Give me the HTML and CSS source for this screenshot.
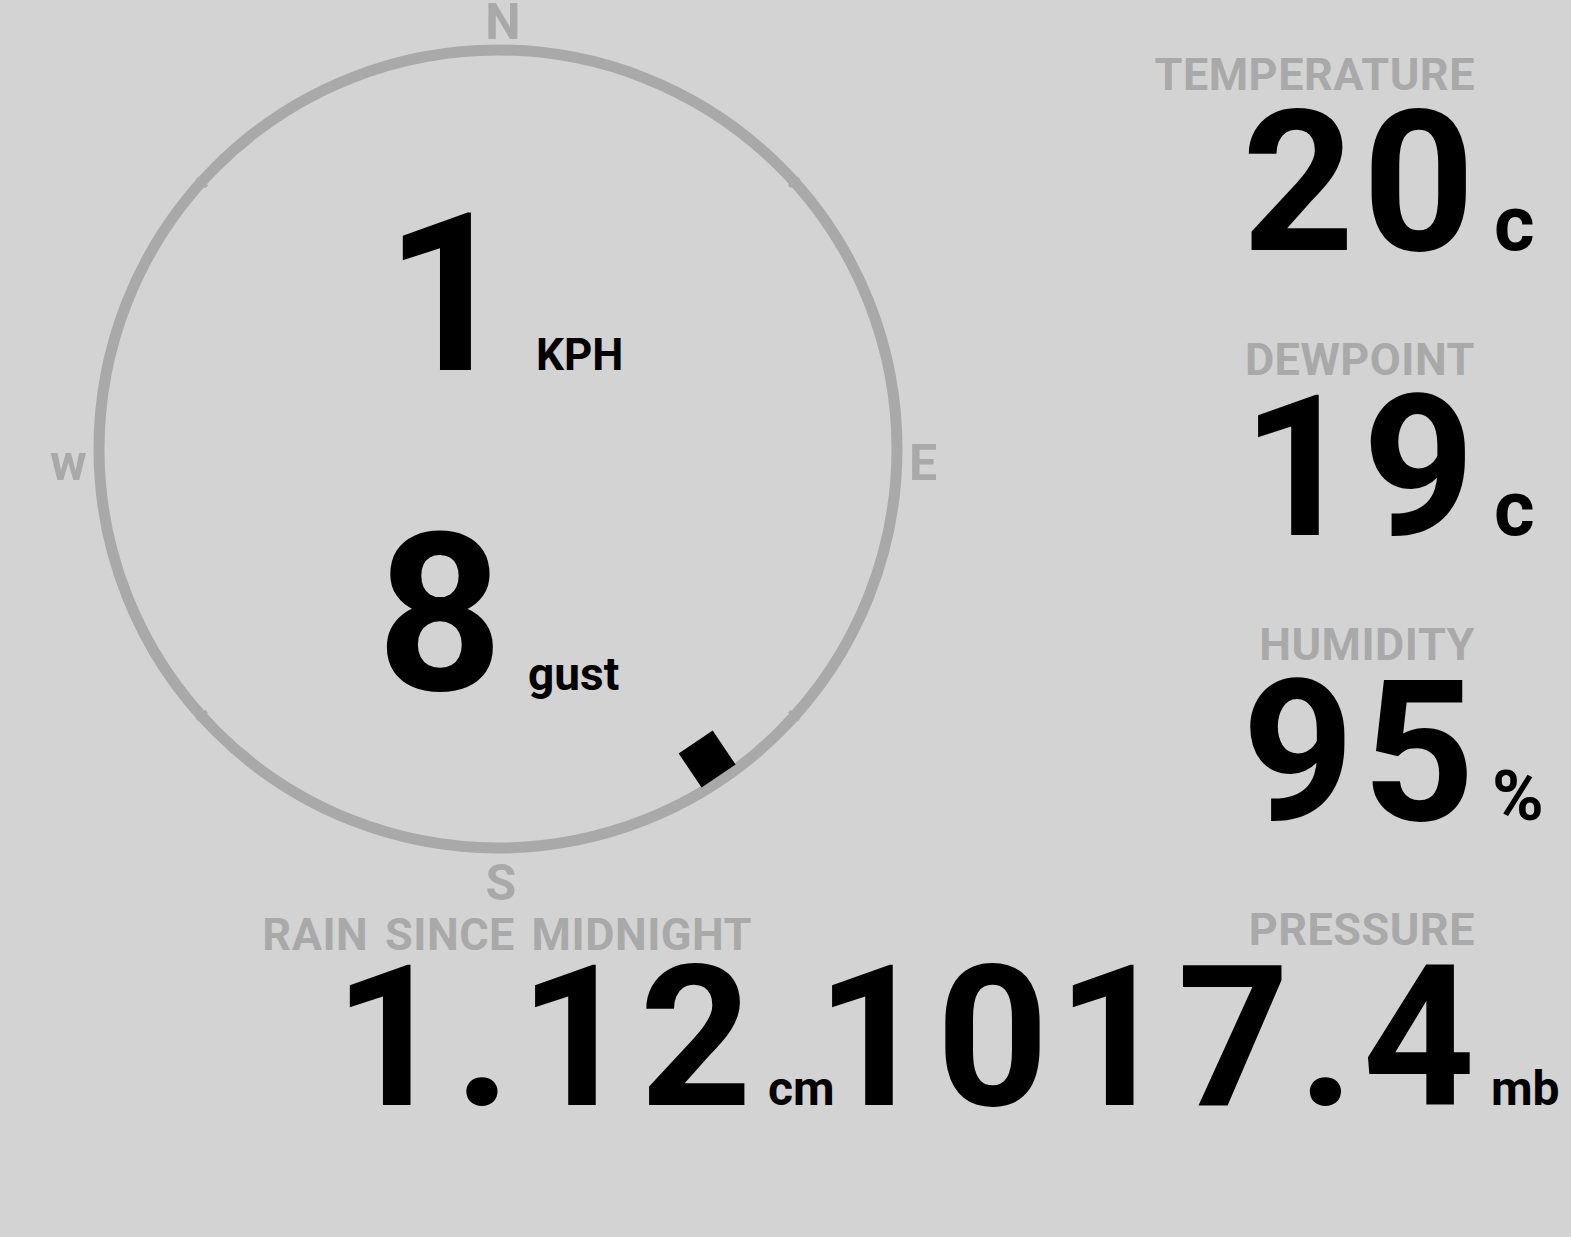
FILE: index.html
```html
<!DOCTYPE html>
<html lang="en">
<head>
    <meta charset="UTF-8">
    <meta name="viewport" content="width=device-width, initial-scale=1.0">
    <title>WEATHER</title>
    <link rel="stylesheet" href="styles.css">
</head>
<body>
    <div class="top">
        <div class="compass">
            <svg class="dial" width="800" height="800" viewBox="0 0 800 800">
                <circle cx="400" cy="400" r="399" fill="none" stroke="#a9a9a9" stroke-width="11"/>
                <g fill="#a9a9a9">
                    <rect x="398" y="-5" width="4" height="13" transform="rotate(48 400 400)"/>
                    <rect x="398" y="-5" width="4" height="13" transform="rotate(132 400 400)"/>
                    <rect x="398" y="-5" width="4" height="13" transform="rotate(228 400 400)"/>
                    <rect x="398" y="-5" width="4" height="13" transform="rotate(312 400 400)"/>
                </g>
                <!-- wind direction, degrees from north -->
                <rect x="379.5" y="5.5" width="41" height="41" fill="#000" transform="rotate(146 400 400)"/>
            </svg>
            <span class="point north">N</span>
            <span class="point east">E</span>
            <span class="point south">S</span>
            <span class="point west">w</span>
            <div class="wind">
                <div class="reading speed-row"><span class="speed">1</span><span class="wind-unit">KPH</span></div>
                <div class="reading"><span class="speed">8</span><span class="wind-unit">gust</span></div>
            </div>
        </div>

        <div class="stats">
            <div class="block">
                <div class="label">TEMPERATURE</div>
                <div class="value">20<span class="unit">c</span></div>
            </div>
            <div class="block">
                <div class="label">DEWPOINT</div>
                <div class="value">19<span class="unit">c</span></div>
            </div>
            <div class="block">
                <div class="label">HUMIDITY</div>
                <div class="value">95<span class="unit pct">%</span></div>
            </div>
        </div>
    </div>

    <div class="bottom">
        <div class="block rain">
            <div class="label">RAIN SINCE MIDNIGHT</div>
            <div class="value">1.12<span class="unit small">cm</span></div>
        </div>
        <div class="block pressure">
            <div class="label">PRESSURE</div>
            <div class="value">1017.4<span class="unit small">mb</span></div>
        </div>
    </div>
</body>
</html>
```

FILE: styles.css
```css
body {
    margin: 0;
    background-color: #d3d3d3;
    font-family: Roboto, "Liberation Sans", sans-serif;
    font-weight: 700;
    color: #000;
}
.top {
    display: flex;
    align-items: flex-start;
    padding: 49px 96px 0 98px;
}
.compass {
    position: relative;
    width: 800px;
    height: 800px;
    flex-shrink: 0;
}
.dial {
    position: absolute;
    left: 0;
    top: 0;
    overflow: visible;
}
.point {
    position: absolute;
    font-size: 50px;
    line-height: 50px;
    color: #a9a9a9;
}
.north {
    top: -52px;
    left: 355px;
    width: 100px;
    text-align: center;
}
.south {
    top: 809px;
    left: 353px;
    width: 100px;
    text-align: center;
}
.east {
    top: 389px;
    left: 811px;
}
.west {
    top: 389px;
    left: -48px;
}
.wind {
    position: relative;
    padding-top: 136px;
    display: flex;
    flex-direction: column;
    align-items: center;
    gap: 100px;
}
.reading {
    font-size: 220px;
    line-height: 220px;
    white-space: nowrap;
}
.speed-row {
    padding-left: 12px;
}
.wind-unit {
    font-size: 46px;
    line-height: 1;
    margin-left: 25px;
}
.speed-row .wind-unit {
    font-size: 44px;
}
.stats {
    margin-left: auto;
    padding-top: 1px;
    display: flex;
    flex-direction: column;
    align-items: flex-end;
    gap: 68px;
}
.block {
    text-align: right;
}
.label {
    font-size: 45px;
    line-height: 50px;
    color: #a9a9a9;
    white-space: nowrap;
    letter-spacing: 0.5px;
    word-spacing: 5px;
}
.value {
    font-size: 196px;
    line-height: 167px;
    white-space: nowrap;
    letter-spacing: 8px;
    margin-right: -8px;
}
.unit {
    display: inline-block;
    width: 0;
    text-align: left;
    text-indent: 11px;
    font-size: 78px;
    line-height: 1;
    letter-spacing: 0;
    white-space: nowrap;
}
.unit.pct {
    font-size: 70px;
    text-indent: 9px;
}
.unit.small {
    font-size: 48px;
    text-indent: 8px;
}
.bottom {
    display: flex;
    align-items: flex-start;
    margin-top: 56px;
    padding-right: 96px;
}
.rain {
    width: 752px;
    flex-shrink: 0;
    padding-top: 5px;
}
.rain .value {
    margin-top: -5px;
}
.pressure {
    margin-left: auto;
}
```
